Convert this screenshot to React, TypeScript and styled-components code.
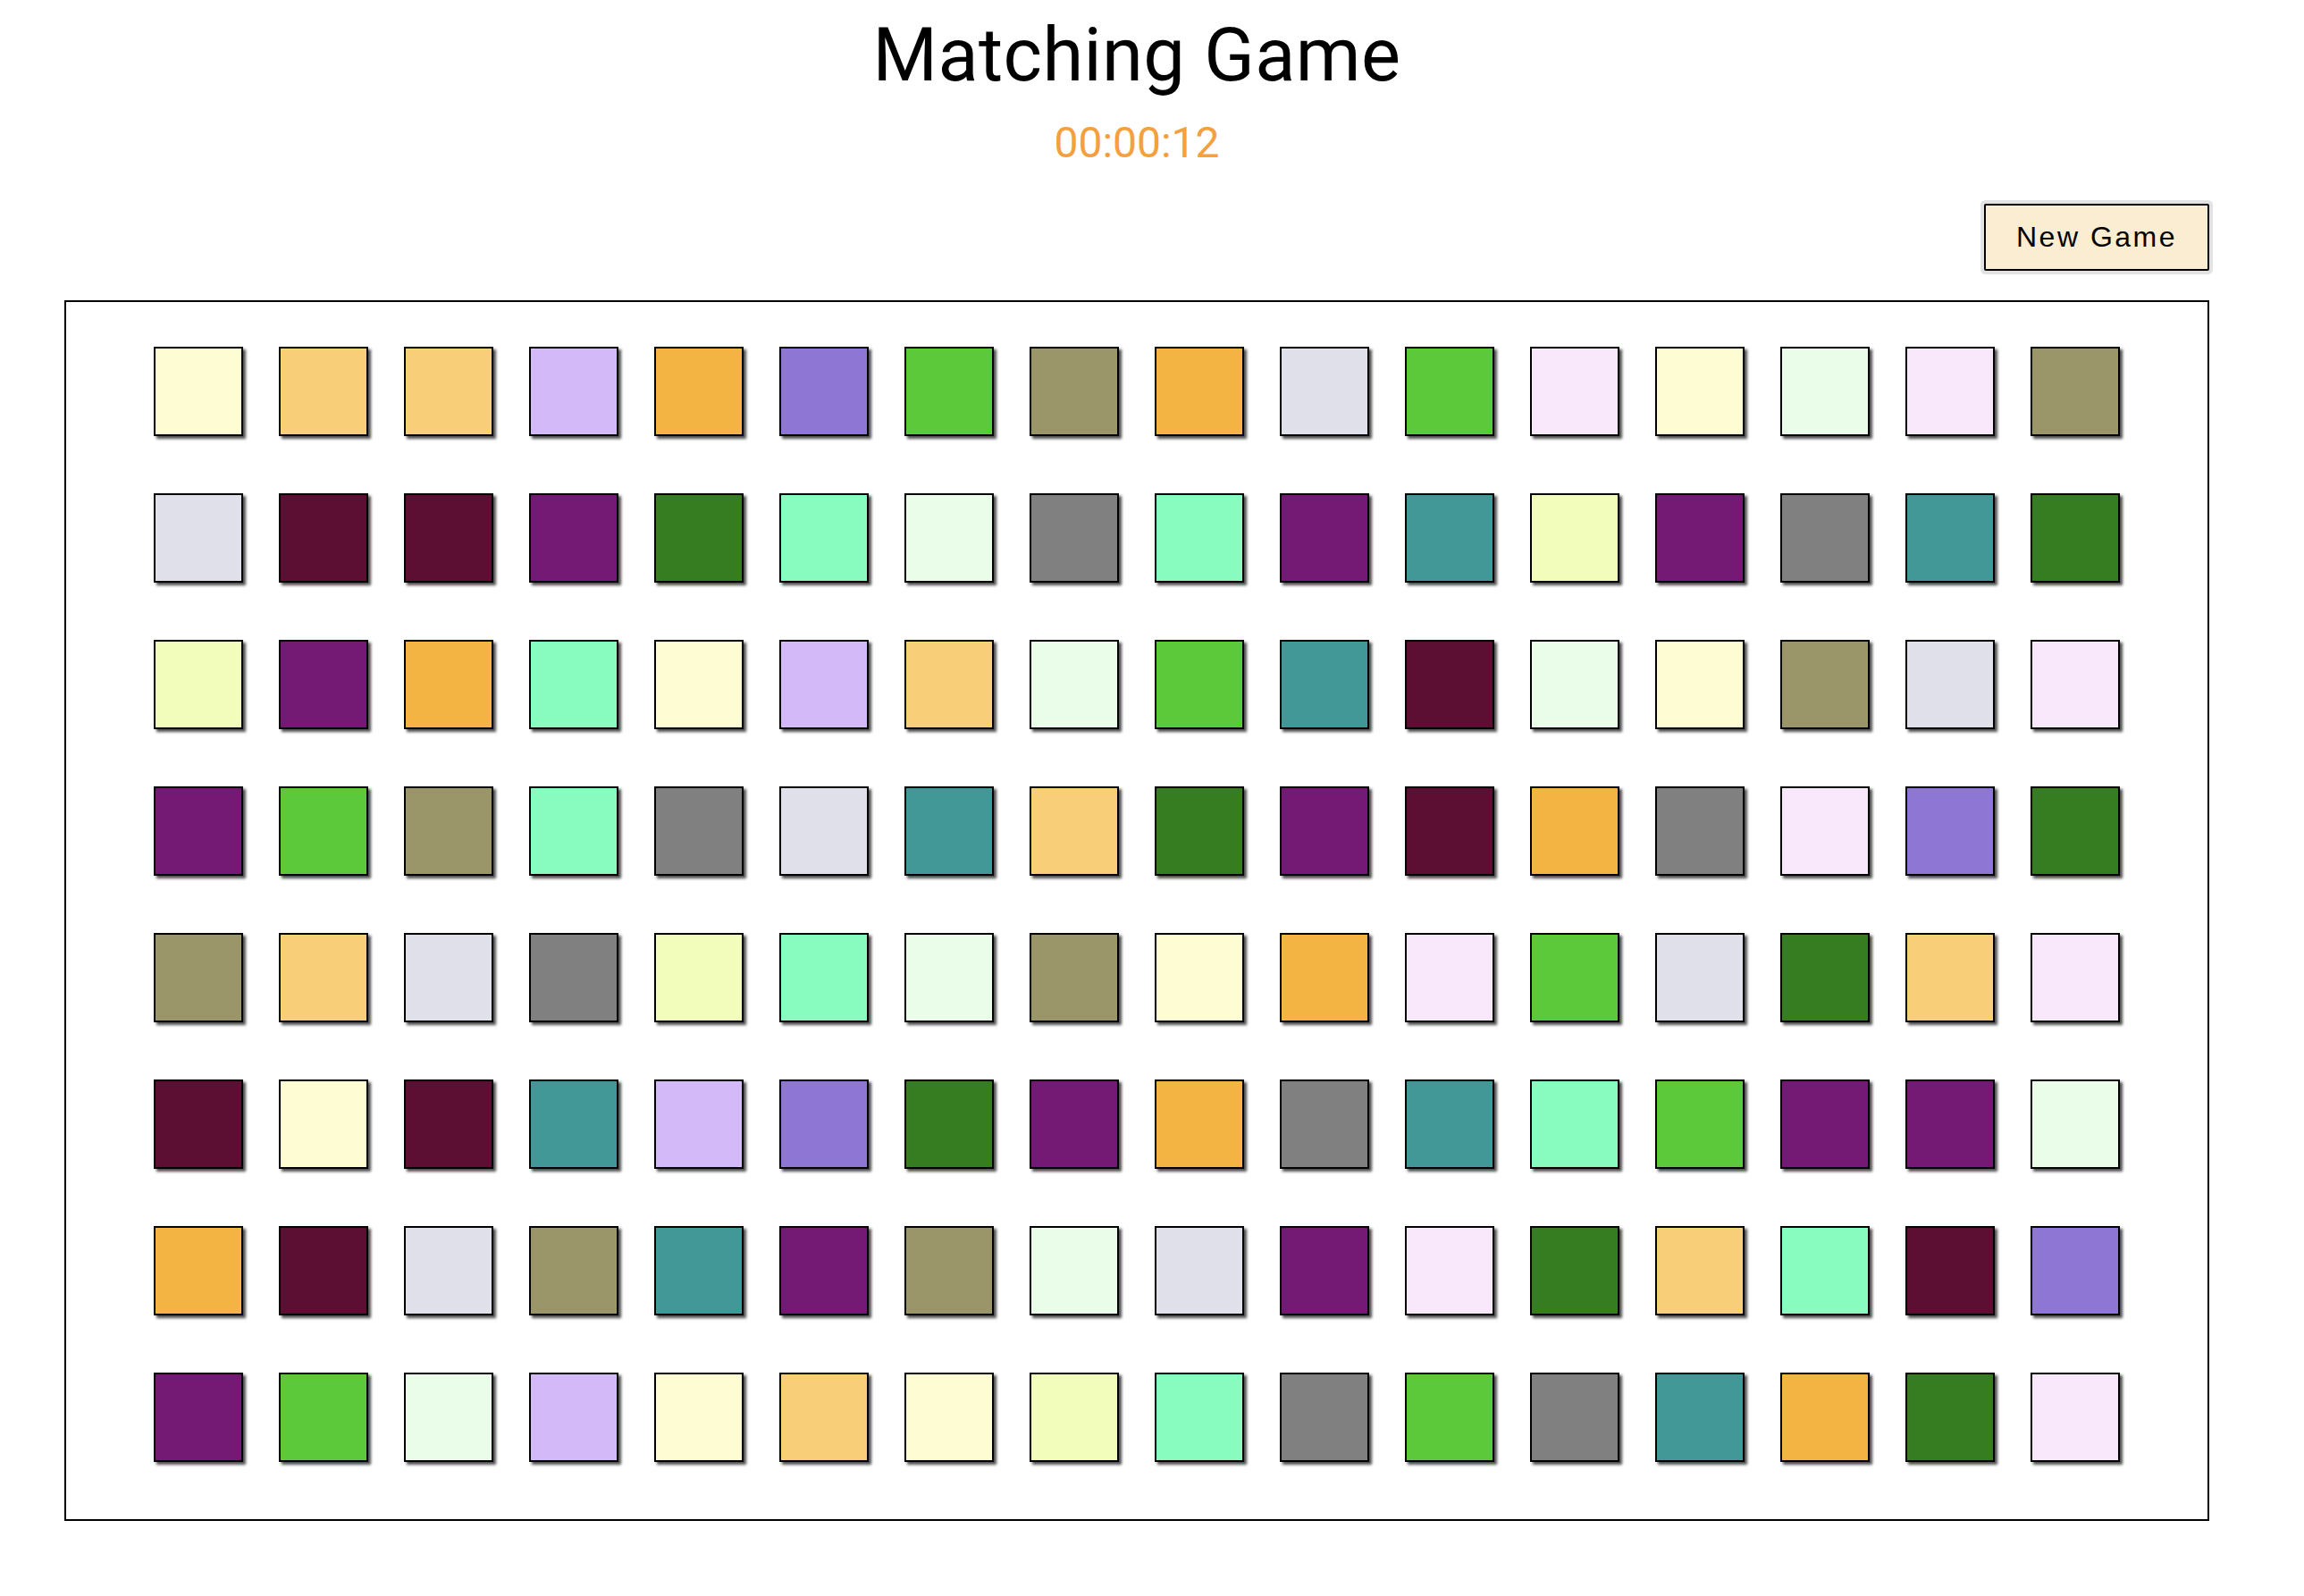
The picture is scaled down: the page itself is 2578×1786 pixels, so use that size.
import styled, { createGlobalStyle } from "styled-components";

const GlobalStyle = createGlobalStyle`
  body {
    margin: 0;
    background: #ffffff;
    font-family: Roboto, "Noto Sans", sans-serif;
  }
`;

// Tile palette
const C = {
  cream: "#fefcd3",
  lorange: "#f9ce78",
  lavender: "#d4b9f8",
  orange: "#f3b444",
  mpurple: "#8e77d4",
  green: "#5cc93a",
  olive: "#9a9669",
  lgray: "#e0e0ea",
  pink: "#f9e7fb",
  mint: "#eafde8",
  maroon: "#5c0f32",
  dpurple: "#741a74",
  dgreen: "#367d22",
  aqua: "#88fbbe",
  gray: "#808080",
  teal: "#429797",
  lyg: "#f2fdbb",
};

type Key = keyof typeof C;

const board: Key[][] = [
  ["cream", "lorange", "lorange", "lavender", "orange", "mpurple", "green", "olive", "orange", "lgray", "green", "pink", "cream", "mint", "pink", "olive"],
  ["lgray", "maroon", "maroon", "dpurple", "dgreen", "aqua", "mint", "gray", "aqua", "dpurple", "teal", "lyg", "dpurple", "gray", "teal", "dgreen"],
  ["lyg", "dpurple", "orange", "aqua", "cream", "lavender", "lorange", "mint", "green", "teal", "maroon", "mint", "cream", "olive", "lgray", "pink"],
  ["dpurple", "green", "olive", "aqua", "gray", "lgray", "teal", "lorange", "dgreen", "dpurple", "maroon", "orange", "gray", "pink", "mpurple", "dgreen"],
  ["olive", "lorange", "lgray", "gray", "lyg", "aqua", "mint", "olive", "cream", "orange", "pink", "green", "lgray", "dgreen", "lorange", "pink"],
  ["maroon", "cream", "maroon", "teal", "lavender", "mpurple", "dgreen", "dpurple", "orange", "gray", "teal", "aqua", "green", "dpurple", "dpurple", "mint"],
  ["orange", "maroon", "lgray", "olive", "teal", "dpurple", "olive", "mint", "lgray", "dpurple", "pink", "dgreen", "lorange", "aqua", "maroon", "mpurple"],
  ["dpurple", "green", "mint", "lavender", "cream", "lorange", "cream", "lyg", "aqua", "gray", "green", "gray", "teal", "orange", "dgreen", "pink"],
];

export default function App() {
  return (
    <>
      <GlobalStyle />
      <Page>
        <Title>Matching Game</Title>
        <Timer>00:00:12</Timer>
        <Toolbar>
          <NewGameButton>New Game</NewGameButton>
        </Toolbar>
        <Board>
          {board.flat().map((c, i) => (
            <Tile key={i} color={C[c]} />
          ))}
        </Board>
      </Page>
    </>
  );
}

const Page = styled.div`
  width: 2400px;
  margin-left: 72px;
  display: flex;
  flex-direction: column;
  align-items: center;
`;

const Title = styled.h1`
  margin: 13px 0 0;
  font-family: Roboto, sans-serif;
  font-size: 83px;
  font-weight: 400;
  line-height: normal;
  letter-spacing: 0.4px;
  color: #000;
`;

const Timer = styled.div`
  margin-top: 21px;
  font-family: Roboto, sans-serif;
  font-size: 48px;
  line-height: normal;
  color: #f4a03f;
`;

const Toolbar = styled.div`
  align-self: stretch;
  display: flex;
  justify-content: flex-end;
  margin-top: 40px;
`;

const NewGameButton = styled.button`
  width: 252px;
  height: 75px;
  background: #fbedd2;
  border: 2px solid #000;
  border-radius: 2px;
  box-shadow: 0 0 0 4px #e2e2e2;
  font-family: "Liberation Sans", Arial, sans-serif;
  font-size: 32px;
  letter-spacing: 2.5px;
  color: #000;
  padding: 0;
  cursor: pointer;
`;

const Board = styled.div`
  align-self: stretch;
  margin-top: 33px;
  border: 2px solid #000;
  padding: 50px 0 64px;
  display: grid;
  grid-template-columns: repeat(16, 100px);
  grid-auto-rows: 100px;
  column-gap: 40px;
  row-gap: 64px;
  justify-content: center;
`;

const Tile = styled.div<{ color: string }>`
  box-sizing: border-box;
  width: 100px;
  height: 100px;
  background: ${(p) => p.color};
  border: 2px solid #000;
  box-shadow: 3px 3px 3px rgba(0, 0, 0, 0.7);
  cursor: pointer;
`;
